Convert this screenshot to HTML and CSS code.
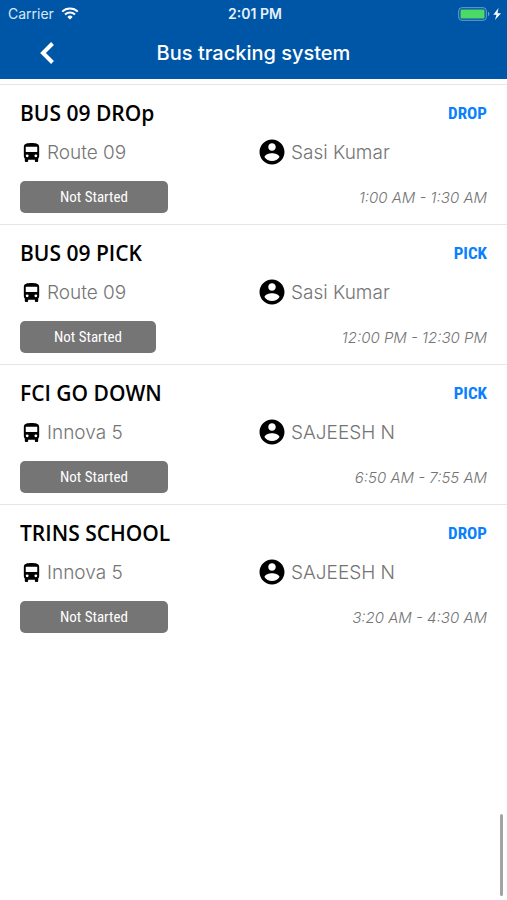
FILE: index.html
```html
<!DOCTYPE html>
<html lang="en">
<head>
<meta charset="utf-8">
<meta name="viewport" content="width=device-width, initial-scale=1">
<title>Bus tracking system</title>
<link rel="stylesheet" href="styles.css">
</head>
<body>
<svg class="sprite" aria-hidden="true">
  <symbol id="bus" viewBox="0 0 24 24"><path fill-rule="evenodd" d="M4 16c0 .9.4 1.700 1 2.200V20.500c0 .8.500 1.500 1.300 1.500h.9c.8 0 1.300-.7 1.300-1.500V19.500h7v1c0 .8.500 1.500 1.300 1.500h.9c.8 0 1.300-.7 1.300-1.500V18.200c.6-.5 1-1.300 1-2.200V6c0-3.500-3.600-4-8-4s-8 .5-8 4v10zm3.500 1a1.500 1.500 0 1 1 0-3 1.500 1.500 0 0 1 0 3zm9 0a1.500 1.500 0 1 1 0-3 1.500 1.500 0 0 1 0 3zM18 11.500H6V6h12v5.500z"/></symbol>
  <symbol id="person" viewBox="0 0 24 24"><path d="M12 2C6.480 2 2 6.480 2 12s4.480 10 10 10 10-4.480 10-10S17.520 2 12 2zm0 3c1.660 0 3 1.340 3 3s-1.340 3-3 3-3-1.340-3-3 1.340-3 3-3zm0 14.200c-2.500 0-4.710-1.280-6-3.220.03-1.990 4-3.080 6-3.080 1.990 0 5.970 1.090 6 3.080-1.290 1.940-3.500 3.220-6 3.220z"/></symbol>
</svg>
<header class="header">
  <div class="status">
    <div class="carrier">
      <span>Carrier</span>
      <svg class="wifi" viewBox="0 0 18 13" aria-hidden="true"><path d="M1.200 4.600a11.200 11.200 0 0 1 15.600 0M4 7.500a7.200 7.200 0 0 1 10 0"/><path class="wifi-dot" d="M9 12.600 6.300 9.900a3.900 3.900 0 0 1 5.400 0z"/></svg>
    </div>
    <span class="clock">2:01 PM</span>
    <svg class="battery" viewBox="0 0 44 14" aria-hidden="true">
      <rect class="battery-case" x=".7" y=".7" width="27.600" height="12.600" rx="3.200"/>
      <rect class="battery-level" x="2.500" y="2.500" width="24" height="9" rx="1.200"/>
      <path class="battery-cap" d="M30 4.800c1.800.6 1.800 3.800 0 4.400z"/>
      <path class="bolt" d="M40.500 1 35.300 7.800h3.200L37 13 43 6.200H39.500z"/>
    </svg>
  </div>
  <div class="nav">
    <button class="back" type="button" aria-label="Back"><svg viewBox="0 0 14 22" aria-hidden="true"><path d="M12.500 1.500 3 11l9.500 9.500"/></svg></button>
    <h1>Bus tracking system</h1>
  </div>
</header>
<main>
  <ul class="trips">
    <li class="trip">
      <div class="row"><h2>BUS 09 DROp</h2><span class="kind">DROP</span></div>
      <div class="info"><span class="cell"><svg class="bus" aria-hidden="true"><use href="#bus"/></svg>Route 09</span><span class="cell"><svg class="person" aria-hidden="true"><use href="#person"/></svg>Sasi Kumar</span></div>
      <div class="row"><button class="state" type="button">Not Started</button><span class="time">1:00 AM - 1:30 AM</span></div>
    </li>
    <li class="trip">
      <div class="row"><h2>BUS 09 PICK</h2><span class="kind">PICK</span></div>
      <div class="info"><span class="cell"><svg class="bus" aria-hidden="true"><use href="#bus"/></svg>Route 09</span><span class="cell"><svg class="person" aria-hidden="true"><use href="#person"/></svg>Sasi Kumar</span></div>
      <div class="row"><button class="state state-short" type="button">Not Started</button><span class="time">12:00 PM - 12:30 PM</span></div>
    </li>
    <li class="trip">
      <div class="row"><h2>FCI GO DOWN</h2><span class="kind">PICK</span></div>
      <div class="info"><span class="cell"><svg class="bus" aria-hidden="true"><use href="#bus"/></svg>Innova 5</span><span class="cell"><svg class="person" aria-hidden="true"><use href="#person"/></svg>SAJEESH N</span></div>
      <div class="row"><button class="state" type="button">Not Started</button><span class="time">6:50 AM - 7:55 AM</span></div>
    </li>
    <li class="trip">
      <div class="row"><h2>TRINS SCHOOL</h2><span class="kind">DROP</span></div>
      <div class="info"><span class="cell"><svg class="bus" aria-hidden="true"><use href="#bus"/></svg>Innova 5</span><span class="cell"><svg class="person" aria-hidden="true"><use href="#person"/></svg>SAJEESH N</span></div>
      <div class="row"><button class="state" type="button">Not Started</button><span class="time">3:20 AM - 4:30 AM</span></div>
    </li>
  </ul>
</main>
<div class="scroll-thumb" aria-hidden="true"></div>
</body>
</html>
```
FILE: styles.css
```css
* { box-sizing: border-box; }
body {
  margin: 0;
  min-height: 100vh;
  background: #fff;
  color: #000;
  font-family: Inter, "Liberation Sans", sans-serif;
}
h1, h2, ul { margin: 0; padding: 0; }
.sprite { display: none; }

.header { background: #0056a6; color: #fff; }
.status {
  display: grid;
  grid-template-columns: 1fr auto 1fr;
  align-items: center;
  height: 27px;
  padding: 0 5px 0 8px;
  font-size: 14px;
}
.carrier { display: flex; align-items: center; gap: 7px; color: #d9e8f7; }
.wifi { width: 18px; height: 13px; fill: none; stroke: #fff; stroke-width: 2; }
.wifi .wifi-dot { fill: #fff; stroke: none; }
.clock { font-size: 14px; font-weight: 600; color: #e6f0fa; }
.battery { justify-self: end; width: 44px; height: 14px; }
.battery-case { fill: none; stroke: #6f9fce; stroke-width: 1; }
.battery-level { fill: #4cd964; }
.battery-cap { fill: #6f9fce; }
.bolt { fill: #fff; }
.nav {
  display: grid;
  grid-template-columns: 1fr auto 1fr;
  align-items: center;
  height: 52px;
  padding: 0 32px;
}
.nav h1 { font-size: 20px; font-weight: 500; line-height: 24px; }
.back {
  justify-self: start;
  display: flex;
  padding: 8px;
  border: 0;
  background: none;
}
.back svg { width: 14px; height: 22px; fill: none; stroke: #fff; stroke-width: 4; }

.trips { list-style: none; margin-top: 5px; border-top: 1px solid #e6e6e6; }
.trip {
  display: flex;
  flex-direction: column;
  height: 140px;
  padding: 14px 20px 0;
  border-bottom: 1px solid #e6e6e6;
}
.trip:last-child { border-bottom: 0; }
.row { display: flex; align-items: center; justify-content: space-between; }
.trip h2 { font: 600 21px/28px "Open Sans", sans-serif; }
.kind { color: #0a7fff; font: bold 17px/28px "Roboto Condensed", Roboto, sans-serif; }
.info {
  display: grid;
  grid-template-columns: 237px 1fr;
  height: 30px;
  margin: 10px 0 14px;
  color: #757575;
  font-size: 19px;
  font-weight: 300;
}
.cell { display: flex; align-items: center; gap: 4px; }
.cell svg { fill: #000; }
.bus { width: 23px; height: 23px; }
.person { width: 30px; height: 30px; }
.state {
  width: 148px;
  height: 32px;
  border: 0;
  border-radius: 5px;
  background: #757575;
  color: #fff;
  font: 15px "Roboto Condensed", Roboto, sans-serif;
}
.state-short { width: 136px; }
.time { color: #757575; font-size: 15px; font-weight: 300; font-style: italic; }

.scroll-thumb {
  position: fixed;
  right: 4px;
  bottom: 4px;
  width: 3px;
  height: 82px;
  border-radius: 2px;
  background: #a3a3a3;
}
```
